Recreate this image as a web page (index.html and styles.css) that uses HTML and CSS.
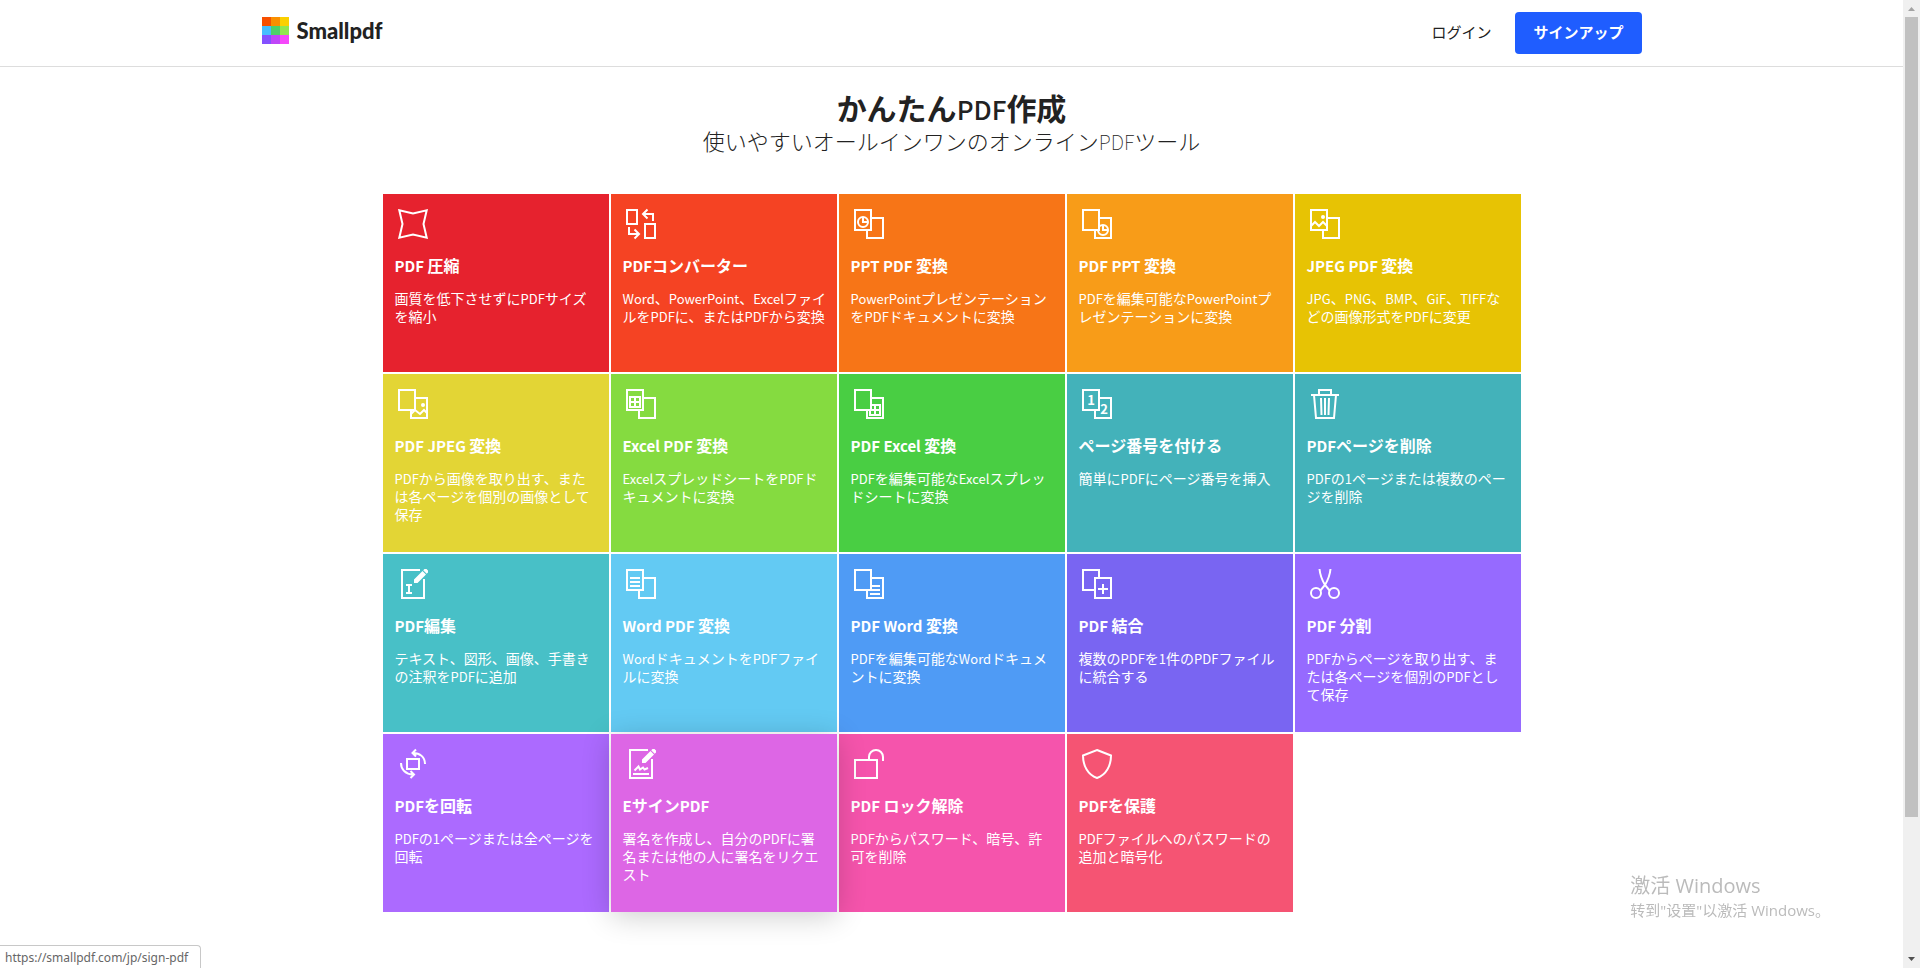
FILE: index.html
```html
<!DOCTYPE html>
<html lang="ja">
<head>
<meta charset="utf-8">
<meta name="viewport" content="width=device-width, initial-scale=1">
<title>Smallpdf</title>
<link rel="stylesheet" href="styles.css">
</head>
<body>
<div class="page">
  <header class="header">
    <div class="header-inner">
      <a class="logo" href="#">
        <svg class="logo-mark" viewBox="0 0 27 27" shape-rendering="crispEdges" aria-hidden="true">
          <path fill="#f74f00" d="M0 0h9v9H0z"/><path fill="#fa8f00" d="M9 0h9v9H9z"/><path fill="#fbd000" d="M18 0h9v9h-9z"/>
          <path fill="#46bdff" d="M0 9h9v9H0z"/><path fill="#4dd068" d="M9 9h9v9H9z"/><path fill="#92e64e" d="M18 9h9v9h-9z"/>
          <path fill="#8450ff" d="M0 18h9v9H0z"/><path fill="#bf46f8" d="M9 18h9v9H9z"/><path fill="#f548fa" d="M18 18h9v9h-9z"/>
        </svg>
        <span class="logo-name">Smallpdf</span>
      </a>
      <nav class="account">
        <a class="login" href="#">ログイン</a>
        <button class="signup" type="button">サインアップ</button>
      </nav>
    </div>
  </header>

  <main class="main">
    <section class="hero">
      <h1 class="hero-title">かんたん<span class="latin">PDF</span>作成</h1>
      <p class="hero-text">使いやすいオールインワンのオンライン<span class="latin">PDF</span>ツール</p>
    </section>

    <div class="tools">
      <a class="tool compress" href="#">
        <svg class="icon" viewBox="0 0 36 36" aria-hidden="true"><path d="M4.300 4.300 18 7.500 31.700 4.300 28.500 18 31.700 31.700 18 28.500 4.300 31.700 7.500 18z"/></svg>
        <h2 class="tool-name"><span class="latin">PDF </span>圧縮</h2>
        <p class="tool-text">画質を低下させずに<span class="latin">PDF</span>サイズを縮小</p>
      </a>
      <a class="tool converter" href="#">
        <svg class="icon" viewBox="0 0 36 36" aria-hidden="true"><path d="M4 4h10v14H4zM22 18h10v14H22zM30 15V8H20M24.500 3.500 20 8l4.500 4.500M6 21v7h10M11.500 23.500 16 28l-4.500 4.500"/></svg>
        <h2 class="tool-name"><span class="latin">PDF</span>コンバーター</h2>
        <p class="tool-text"><span class="latin">Word</span>、<span class="latin">PowerPoint</span>、<span class="latin">Excel</span>ファイルを<span class="latin">PDF</span>に、または<span class="latin">PDF</span>から変換</p>
      </a>
      <a class="tool ppt-pdf" href="#">
        <svg class="icon" viewBox="0 0 36 36" aria-hidden="true"><path d="M4 4h16v20H4zM20 12h12v20H16v-8"/><circle cx="12" cy="16" r="5"/><path d="M12 11v5h5"/></svg>
        <h2 class="tool-name"><span class="latin">PPT PDF </span>変換</h2>
        <p class="tool-text"><span class="latin">PowerPoint</span>プレゼンテーションを<span class="latin">PDF</span>ドキュメントに変換</p>
      </a>
      <a class="tool pdf-ppt" href="#">
        <svg class="icon" viewBox="0 0 36 36" aria-hidden="true"><path d="M16 12h16v20H16z"/><circle cx="24" cy="24" r="5"/><path d="M24 19v5h5"/><path class="front" d="M4 4h16v20H4z"/></svg>
        <h2 class="tool-name"><span class="latin">PDF PPT </span>変換</h2>
        <p class="tool-text"><span class="latin">PDF</span>を編集可能な<span class="latin">PowerPoint</span>プレゼンテーションに変換</p>
      </a>
      <a class="tool jpeg-pdf" href="#">
        <svg class="icon" viewBox="0 0 36 36" aria-hidden="true"><path d="M4 4h16v20H4zM20 12h12v20H16v-8M4 20l4-4 4 4 4-4 4 4"/><circle class="dot" cx="16" cy="11" r="2"/></svg>
        <h2 class="tool-name"><span class="latin">JPEG PDF </span>変換</h2>
        <p class="tool-text"><span class="latin">JPG</span>、<span class="latin">PNG</span>、<span class="latin">BMP</span>、<span class="latin">GiF</span>、<span class="latin">TIFF</span>などの画像形式を<span class="latin">PDF</span>に変更</p>
      </a>

      <a class="tool pdf-jpeg" href="#">
        <svg class="icon" viewBox="0 0 36 36" aria-hidden="true"><path d="M16 12h16v20H16zM16 28l4-4 5 4 4-4 3 3"/><circle class="dot" cx="28" cy="19" r="2"/><path class="front" d="M4 4h16v20H4z"/></svg>
        <h2 class="tool-name"><span class="latin">PDF JPEG </span>変換</h2>
        <p class="tool-text"><span class="latin">PDF</span>から画像を取り出す、または各ページを個別の画像として保存</p>
      </a>
      <a class="tool excel-pdf" href="#">
        <svg class="icon" viewBox="0 0 36 36" aria-hidden="true"><path d="M4 4h16v20H4zM20 12h12v20H16v-8M7 11h10v10H7zM12 11v10M7 16h10"/></svg>
        <h2 class="tool-name"><span class="latin">Excel PDF </span>変換</h2>
        <p class="tool-text"><span class="latin">Excel</span>スプレッドシートを<span class="latin">PDF</span>ドキュメントに変換</p>
      </a>
      <a class="tool pdf-excel" href="#">
        <svg class="icon" viewBox="0 0 36 36" aria-hidden="true"><path d="M16 12h16v20H16zM19 19h10v10H19zM24 19v10M19 24h10"/><path class="front" d="M4 4h16v20H4z"/></svg>
        <h2 class="tool-name"><span class="latin">PDF Excel </span>変換</h2>
        <p class="tool-text"><span class="latin">PDF</span>を編集可能な<span class="latin">Excel</span>スプレッドシートに変換</p>
      </a>
      <a class="tool numbers" href="#">
        <svg class="icon" viewBox="0 0 36 36" aria-hidden="true"><path d="M4 4h16v20H4zM20 12h12v20H16v-8"/><text class="digit" x="12" y="19">1</text><text class="digit" x="25" y="28">2</text></svg>
        <h2 class="tool-name">ページ番号を付ける</h2>
        <p class="tool-text">簡単に<span class="latin">PDF</span>にページ番号を挿入</p>
      </a>
      <a class="tool delete" href="#">
        <svg class="icon" viewBox="0 0 36 36" aria-hidden="true"><path d="M4 9h28M12 9V4h12v5M7 9l2 23h18l2-23M14 12l.500 17M18 12v17M22 12l-.500 17"/></svg>
        <h2 class="tool-name"><span class="latin">PDF</span>ページを削除</h2>
        <p class="tool-text"><span class="latin">PDF</span>の<span class="latin">1</span>ページまたは複数のページを削除</p>
      </a>

      <a class="tool edit" href="#">
        <svg class="icon" viewBox="0 0 36 36" aria-hidden="true"><path d="M25 4H7v28h22V13M11 19h6M14 19v8M11 27h6"/><path class="solid" d="M19 17v-3.500l8.500-8.500 3.500 3.500-8.500 8.500zM28.200 4.300 29.500 3h2L33 4.500v2l-1.300 1.300z"/></svg>
        <h2 class="tool-name"><span class="latin">PDF</span>編集</h2>
        <p class="tool-text">テキスト、図形、画像、手書きの注釈を<span class="latin">PDF</span>に追加</p>
      </a>
      <a class="tool word-pdf" href="#">
        <svg class="icon" viewBox="0 0 36 36" aria-hidden="true"><path d="M4 4h16v20H4zM20 12h12v20H16v-8M7 12h10M7 16h10M7 20h10"/></svg>
        <h2 class="tool-name"><span class="latin">Word PDF </span>変換</h2>
        <p class="tool-text"><span class="latin">Word</span>ドキュメントを<span class="latin">PDF</span>ファイルに変換</p>
      </a>
      <a class="tool pdf-word" href="#">
        <svg class="icon" viewBox="0 0 36 36" aria-hidden="true"><path d="M16 12h16v20H16zM19 20h10M19 24h10M19 28h10"/><path class="front" d="M4 4h16v20H4z"/></svg>
        <h2 class="tool-name"><span class="latin">PDF Word </span>変換</h2>
        <p class="tool-text"><span class="latin">PDF</span>を編集可能な<span class="latin">Word</span>ドキュメントに変換</p>
      </a>
      <a class="tool merge" href="#">
        <svg class="icon" viewBox="0 0 36 36" aria-hidden="true"><path d="M16 24H4V4h16v8M16 12h16v20H16zM24 18v10M19 23h10"/></svg>
        <h2 class="tool-name"><span class="latin">PDF </span>結合</h2>
        <p class="tool-text">複数の<span class="latin">PDF</span>を<span class="latin">1</span>件の<span class="latin">PDF</span>ファイルに統合する</p>
      </a>
      <a class="tool split" href="#">
        <svg class="icon" viewBox="0 0 36 36" aria-hidden="true"><circle cx="9" cy="27" r="5"/><circle cx="27" cy="27" r="5"/><path d="M12.500 3c.500 5 2.500 11 5.500 16l5 6M23.500 3c-.500 5-2.500 11-5.500 16l-5 6"/></svg>
        <h2 class="tool-name"><span class="latin">PDF </span>分割</h2>
        <p class="tool-text"><span class="latin">PDF</span>からページを取り出す、または各ページを個別の<span class="latin">PDF</span>として保存</p>
      </a>

      <a class="tool rotate" href="#">
        <svg class="icon" viewBox="0 0 36 36" aria-hidden="true"><path d="M12 13h12v10H12zM18 7c7 0 12 4 12 11M21 3.500 17.500 7l3.500 3.500M6 17c0 7 5 11 12 11.500M15.500 25l3.500 3.500-3.500 3.500"/></svg>
        <h2 class="tool-name"><span class="latin">PDF</span>を回転</h2>
        <p class="tool-text"><span class="latin">PDF</span>の<span class="latin">1</span>ページまたは全ページを回転</p>
      </a>
      <a class="tool esign" href="#">
        <svg class="icon" viewBox="0 0 36 36" aria-hidden="true"><path d="M25 4H7v28h22V13M10 28h16M11.500 24.500l4-4 1.500 3 3-2 1.500 2 3.500-1.500"/><path class="solid" d="M19 17v-3.500l8.500-8.500 3.500 3.500-8.500 8.500zM28.200 4.300 29.500 3h2L33 4.500v2l-1.300 1.300z"/></svg>
        <h2 class="tool-name"><span class="latin">E</span>サイン<span class="latin">PDF</span></h2>
        <p class="tool-text">署名を作成し、自分の<span class="latin">PDF</span>に署名または他の人に署名をリクエスト</p>
      </a>
      <a class="tool unlock" href="#">
        <svg class="icon" viewBox="0 0 36 36" aria-hidden="true"><path d="M4 14h22v18H4zM18 14v-3a7 7 0 0 1 14 0v4"/></svg>
        <h2 class="tool-name"><span class="latin">PDF </span>ロック解除</h2>
        <p class="tool-text"><span class="latin">PDF</span>からパスワード、暗号、許可を削除</p>
      </a>
      <a class="tool protect" href="#">
        <svg class="icon" viewBox="0 0 36 36" aria-hidden="true"><path d="M18 4 32 9.500C32 20 27 29 18 32 9 29 4 20 4 9.500z"/></svg>
        <h2 class="tool-name"><span class="latin">PDF</span>を保護</h2>
        <p class="tool-text"><span class="latin">PDF</span>ファイルへのパスワードの追加と暗号化</p>
      </a>
    </div>
  </main>
</div>

<div class="scrollbar" aria-hidden="true">
  <svg class="arrow" viewBox="0 0 17 17"><path fill="#a3a3a3" d="M5 11h7L8.500 7z"/></svg>
  <div class="track"><div class="thumb"></div></div>
  <svg class="arrow" viewBox="0 0 17 17"><path fill="#505050" d="M5 6h7l-3.500 4z"/></svg>
</div>

<div class="watermark" lang="zh-CN">
  <p class="watermark-title">激活 Windows</p>
  <p class="watermark-text">转到"设置"以激活 Windows。</p>
</div>
<div class="status">https://smallpdf.com/jp/sign-pdf</div>
</body>
</html>
```

FILE: styles.css
```css
* {
  box-sizing: border-box;
}

body {
  display: grid;
  grid-template-columns: minmax(0, 1fr) 17px;
  min-height: 100vh;
  margin: 0;
  background: #fff;
  color: #222;
  font-family: "Noto Sans CJK JP", sans-serif;
}

h1,
h2,
p {
  margin: 0;
}

a {
  color: inherit;
  text-decoration: none;
}

.header {
  border-bottom: 1px solid #ddd;
}

.header-inner {
  display: flex;
  align-items: center;
  justify-content: space-between;
  max-width: 1380px;
  margin: 0 auto;
  padding: 12px 0;
}

.logo {
  display: flex;
  align-items: center;
  gap: 8px;
  margin-bottom: 5px;
}

.logo-mark {
  width: 27px;
  height: 27px;
}

.logo-name {
  font: 900 22px/24px Lato, sans-serif;
}

.account {
  display: flex;
  align-items: center;
  gap: 24px;
  font-size: 15px;
}

.login {
  padding-bottom: 3px;
}

.signup {
  height: 42px;
  padding: 0 18px 3px;
  border: 0;
  border-radius: 4px;
  background: #1f5dff;
  color: #fff;
  font: inherit;
  font-weight: 700;
}

.hero {
  padding: 23px 16px 36px;
  font-family: Lato, "Noto Sans CJK JP", sans-serif;
  text-align: center;
}

.hero-title {
  font-size: 30px;
  font-weight: 700;
  line-height: 36px;
}

.hero-title .latin {
  font-size: 26px;
  font-weight: 500;
}

.hero-text {
  font-size: 22px;
  font-weight: 300;
  line-height: 32px;
}

.hero-text .latin {
  font-size: 20px;
  font-weight: 100;
}

.tools {
  display: grid;
  grid-template-columns: repeat(5, minmax(0, 1fr));
  grid-auto-rows: minmax(178px, auto);
  gap: 2px;
  max-width: 1138px;
  margin: 0 auto;
}

.tool {
  padding: 12px 10px 12px 12px;
  background: var(--tile);
  color: #fff;
  font-family: Lato, "Noto Sans CJK JP", sans-serif;
}

.icon {
  display: block;
  width: 36px;
  height: 36px;
  fill: none;
  stroke: #fff;
  stroke-width: 2;
}

.icon .front {
  fill: var(--tile);
}

.icon .dot,
.icon .solid {
  fill: #fff;
  stroke: none;
}

.icon .digit {
  fill: #fff;
  stroke: none;
  font-family: "Noto Sans CJK JP", sans-serif;
  font-size: 13px;
  font-weight: 700;
  text-anchor: middle;
}

.tool-name {
  margin: 12px 0;
  font-size: 16px;
  font-weight: 700;
  line-height: 24px;
}

.tool-name .latin {
  font-size: 15px;
}

.tool-text {
  font-size: 14px;
  line-height: 18px;
}

.tool-text .latin {
  font-size: 13px;
}

.latin {
  font-family: "Noto Sans CJK JP", sans-serif;
  line-height: 1;
}

.compress { --tile: #e6222e; }
.converter { --tile: #f54323; }
.ppt-pdf { --tile: #f77517; }
.pdf-ppt { --tile: #f89c18; }
.jpeg-pdf { --tile: #e7c304; }
.pdf-jpeg { --tile: #e3d535; }
.excel-pdf { --tile: #85db40; }
.pdf-excel { --tile: #49ce43; }
.numbers { --tile: #43b2ba; }
.delete { --tile: #43b2ba; }
.edit { --tile: #48c0c7; }
.word-pdf { --tile: #63caf3; }
.pdf-word { --tile: #4f9bf5; }
.merge { --tile: #7965f2; }
.split { --tile: #966aff; }
.rotate { --tile: #ac6aff; }
.esign { --tile: #dd66e5; }
.unlock { --tile: #f554ac; }
.protect { --tile: #f55473; }

.esign {
  z-index: 1;
  box-shadow: 0 4px 28px rgba(0, 0, 0, 0.2);
}

.scrollbar {
  display: flex;
  flex-direction: column;
  height: 100vh;
  background: #f0f0f0;
}

.arrow {
  width: 17px;
  height: 17px;
}

.track {
  flex: 1;
  padding: 0 2px;
}

.thumb {
  height: 85.6%;
  background: #c1c1c1;
}

.watermark {
  position: fixed;
  right: 90px;
  bottom: 47px;
  color: #bbb;
  font-family: "Open Sans", "Noto Sans CJK SC", sans-serif;
}

.watermark-title {
  font-size: 20px;
  line-height: 26px;
}

.watermark-text {
  font-size: 15px;
  line-height: 22px;
}

.status {
  position: fixed;
  left: 0;
  bottom: 0;
  padding: 3px 12px 2px 5px;
  border: 1px solid #c8c8c8;
  border-width: 1px 1px 0 0;
  border-radius: 0 4px 0 0;
  background: #fff;
  color: #666;
  font: 12px/17px "Noto Sans", sans-serif;
}
```
